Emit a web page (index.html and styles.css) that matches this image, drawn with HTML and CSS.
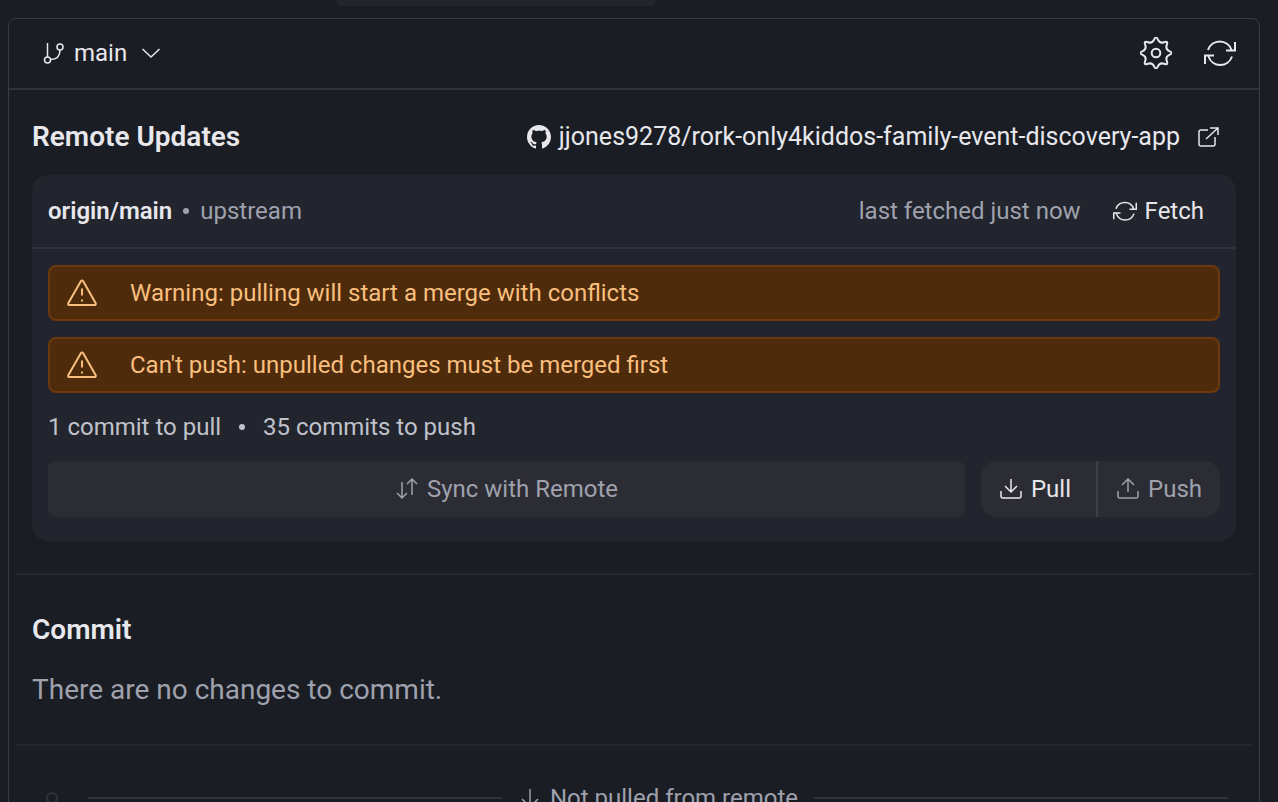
FILE: index.html
```html
<!DOCTYPE html>
<html lang="en">
<head>
<meta charset="utf-8">
<meta name="viewport" content="width=device-width, initial-scale=1">
<title>Git</title>
<link rel="stylesheet" href="styles.css">
</head>
<body>
<div class="tab-edge"></div>
<main class="panel">
  <header class="panel-header">
    <button class="branch" type="button">
      <svg class="icon-md" viewBox="0 0 24 24"><path d="M5.500 2v14M18 9c0 6-3 9.500-9.500 9.500"/><circle cx="5.500" cy="19" r="3"/><circle cx="18" cy="6" r="3"/></svg>
      <span>main</span>
      <svg class="icon-md chevron" viewBox="0 0 24 24"><path d="M3.500 8l8.500 8 8.500-8"/></svg>
    </button>
    <div class="header-actions">
      <button class="icon-button" type="button" aria-label="Settings">
        <svg class="icon-lg" viewBox="0 0 32 32"><circle cx="16" cy="16" r="4.300"/><path d="M14.100 2.600Q16-1.500 17.900 2.600Q19.800 6.800 24.100 5.200Q28.400 3.600 26.800 7.900Q25.200 12.200 29.400 14.100Q33.500 16 29.400 17.900Q25.200 19.800 26.800 24.100Q28.400 28.400 24.100 26.800Q19.800 25.200 17.900 29.400Q16 33.500 14.100 29.400Q12.200 25.200 7.900 26.800Q3.600 28.400 5.200 24.100Q6.800 19.800 2.600 17.900Q-1.500 16 2.600 14.100Q6.800 12.200 5.200 7.900Q3.600 3.600 7.900 5.200Q12.200 6.800 14.100 2.600Z"/></svg>
      </button>
      <button class="icon-button" type="button" aria-label="Refresh">
        <svg class="icon-lg" viewBox="0 0 32 32"><path d="M4 13A12.400 12.400 0 0 1 27.500 13M31 5v8.500h-9M28 19.500A12.400 12.400 0 0 1 4.500 19.500M1 27v-8.500h9"/></svg>
      </button>
    </div>
  </header>

  <section class="section">
    <div class="section-head">
      <h2>Remote Updates</h2>
      <a class="repo" href="#">
        <svg class="icon-md github" viewBox="0 0 16 16"><path d="M8 0C3.580 0 0 3.580 0 8c0 3.540 2.290 6.530 5.470 7.590.4.070.55-.17.55-.38 0-.19-.01-.82-.01-1.490-2.010.37-2.530-.49-2.690-.94-.09-.23-.48-.94-.82-1.130-.28-.15-.68-.52-.01-.53.63-.01 1.080.58 1.230.82.72 1.210 1.870.87 2.330.66.07-.52.28-.87.51-1.070-1.780-.2-3.640-.89-3.640-3.950 0-.87.31-1.590.82-2.150-.08-.2-.36-1.020.08-2.120 0 0 .67-.21 2.200.82.64-.18 1.320-.27 2-.27s1.360.09 2 .27c1.530-1.040 2.200-.82 2.200-.82.44 1.100.16 1.920.08 2.120.51.56.82 1.270.82 2.150 0 3.070-1.870 3.750-3.650 3.950.29.25.54.73.54 1.480 0 1.070-.01 1.930-.01 2.200 0 .21.15.46.55.38A8.010 8.010 0 0 0 16 8c0-4.420-3.580-8-8-8z"/></svg>
        <span>jjones9278/rork-only4kiddos-family-event-discovery-app</span>
        <svg class="icon-md external" viewBox="0 0 24 24"><path d="M12 5H5a2 2 0 0 0-2 2v12a2 2 0 0 0 2 2h12a2 2 0 0 0 2-2v-7M14 3h8v7M22 3L10 14"/></svg>
      </a>
    </div>

    <div class="card">
      <div class="card-head">
        <div class="origin"><strong>origin/main</strong><span class="dot"></span><span>upstream</span></div>
        <div class="fetch">
          <span>last fetched just now</span>
          <button class="fetch-button" type="button">
            <svg class="icon-md thick" viewBox="0 0 32 32"><path d="M4 13A12.400 12.400 0 0 1 27.500 13M31 5v8.500h-9M28 19.500A12.400 12.400 0 0 1 4.500 19.500M1 27v-8.500h9"/></svg>
            Fetch
          </button>
        </div>
      </div>
      <div class="card-body">
        <div class="alert" role="alert">
          <svg class="icon-lg" viewBox="0 0 32 32"><path d="M14.800 4.300Q16 2.500 17.200 4.300L29.700 26.200Q30.300 28 28.300 28H3.700Q1.700 28 2.300 26.200ZM16 11.500v7"/><path d="M16 22.500v2"/></svg>
          <span>Warning: pulling will start a merge with conflicts</span>
        </div>
        <div class="alert" role="alert">
          <svg class="icon-lg" viewBox="0 0 32 32"><path d="M14.800 4.300Q16 2.500 17.200 4.300L29.700 26.200Q30.300 28 28.300 28H3.700Q1.700 28 2.300 26.200ZM16 11.500v7"/><path d="M16 22.500v2"/></svg>
          <span>Can't push: unpulled changes must be merged first</span>
        </div>
        <div class="counts"><span>1 commit to pull</span><span class="dot"></span><span>35 commits to push</span></div>
        <div class="actions">
          <button class="sync" type="button">
            <svg class="icon-md" viewBox="0 0 24 24"><path d="M7 5v16M2 16l5 5 5-5M17 18V2M12 7l5-5 5 5"/></svg>
            Sync with Remote
          </button>
          <div class="button-group">
            <button class="pull" type="button">
              <svg class="icon-md" viewBox="0 0 24 24"><path d="M12 2v13M6 9l6 6 6-6M2 14v5a2 2 0 0 0 2 2h16a2 2 0 0 0 2-2v-5"/></svg>
              Pull
            </button>
            <button class="push" type="button">
              <svg class="icon-md" viewBox="0 0 24 24"><path d="M12 15V2M6 8l6-6 6 6M2 14v5a2 2 0 0 0 2 2h16a2 2 0 0 0 2-2v-5"/></svg>
              Push
            </button>
          </div>
        </div>
      </div>
    </div>
  </section>

  <section class="section commit">
    <h2>Commit</h2>
    <p>There are no changes to commit.</p>
  </section>

  <section class="section history">
    <span class="node"></span>
    <span class="rule"></span>
    <span class="history-label">
      <svg class="icon-md" viewBox="0 0 24 24"><path d="M12 3v18M4 13l8 8 8-8"/></svg>
      Not pulled from remote
    </span>
    <span class="rule"></span>
  </section>
</main>
</body>
</html>
```
FILE: styles.css
```css
* {
  box-sizing: border-box;
}

body {
  margin: 0;
  height: 100vh;
  overflow: hidden;
  background: #1b1c24;
  color: #e7e7ec;
  font-family: Roboto, "Noto Sans", sans-serif;
  font-size: 24px;
  line-height: 32px;
}

button {
  display: flex;
  align-items: center;
  margin: 0;
  padding: 0;
  border: 0;
  background: none;
  color: inherit;
  font: inherit;
  cursor: pointer;
}

h2,
p {
  margin: 0;
}

h2 {
  font-size: 28px;
  font-weight: 600;
  line-height: 42px;
}

svg {
  flex: none;
  fill: none;
  stroke: currentColor;
  stroke-width: 2;
}

.icon-md {
  width: 24px;
  height: 24px;
  stroke-width: 1.5;
}

.icon-lg {
  width: 32px;
  height: 32px;
}

.icon-md.thick {
  stroke-width: 2;
}

.tab-edge {
  width: 320px;
  height: 6px;
  margin: 0 0 12px 336px;
  border-radius: 0 0 8px 8px;
  background: #22252d;
}

.panel {
  min-height: 100vh;
  margin: 0 18px 0 8px;
  border: 1px solid #393c45;
  border-radius: 8px;
  background: #1a1d24;
}

.panel-header {
  display: flex;
  align-items: center;
  justify-content: space-between;
  height: 71px;
  padding: 0 23px 1px 33px;
  border-bottom: 2px solid #30333b;
}

.branch {
  gap: 8px;
}

.chevron {
  margin-left: 4px;
}

.header-actions {
  display: flex;
  gap: 32px;
}

.section {
  margin: 0 7px;
  padding: 26px 16px 32px;
}

.section + .section {
  border-top: 2px solid #24272f;
}

.section-head {
  display: flex;
  align-items: center;
  justify-content: space-between;
  margin-bottom: 17px;
}

.repo {
  display: flex;
  align-items: center;
  gap: 8px;
  padding-right: 16px;
  color: inherit;
  font-size: 25px;
  text-decoration: none;
}

.github {
  fill: currentColor;
  stroke: none;
}

.external {
  margin-left: 8px;
}

.card {
  border-radius: 16px;
  background: #22252d;
}

.card-head {
  display: flex;
  align-items: center;
  justify-content: space-between;
  height: 74px;
  padding: 0 32px 0 16px;
  border-bottom: 2px solid #30333b;
  color: #9fa1ad;
}

.card-head strong {
  color: #e7e7ec;
  font-weight: 600;
}

.origin {
  display: flex;
  align-items: center;
  gap: 11px;
}

.dot {
  width: 6px;
  height: 6px;
  border-radius: 50%;
  background: currentColor;
}

.fetch {
  display: flex;
  gap: 32px;
}

.fetch-button {
  gap: 8px;
  color: #e7e7ec;
}

.card-body {
  display: flex;
  flex-direction: column;
  gap: 16px;
  padding: 16px 16px 24px;
}

.alert {
  display: flex;
  align-items: center;
  gap: 32px;
  height: 56px;
  padding: 0 16px;
  border: 2px solid #6c390e;
  border-radius: 8px;
  background: #4e2b0b;
  color: #f9bf7e;
}

.counts {
  display: flex;
  align-items: center;
  gap: 18px;
  height: 36px;
  color: #c0c2cb;
}

.actions {
  display: flex;
  gap: 16px;
}

.sync {
  flex: 1;
  justify-content: center;
  gap: 8px;
  height: 56px;
  border-radius: 8px;
  background: #2c2c35;
  color: #9fa1ad;
}

.button-group {
  display: flex;
  overflow: hidden;
  border-radius: 16px;
  background: #2c2c35;
}

.pull,
.push {
  gap: 8px;
  padding: 0 18px;
}

.pull {
  padding-right: 25px;
}

.push {
  border-left: 2px solid #3d3e48;
  color: #9fa1ad;
}

.commit {
  padding: 34px 16px;
}

.commit p {
  margin-top: 19px;
  color: #9fa1ad;
  font-size: 28px;
  line-height: 40px;
}

.history {
  display: flex;
  align-items: center;
  gap: 16px;
  padding: 36px 24px 32px;
}

.node {
  width: 12px;
  height: 12px;
  margin: 0 14px 0 6px;
  border: 2px solid #30333b;
  border-radius: 50%;
}

.rule {
  flex: 1;
  height: 2px;
  background: #30333b;
}

.history-label {
  display: flex;
  align-items: center;
  gap: 8px;
  color: #9fa1ad;
}
```
